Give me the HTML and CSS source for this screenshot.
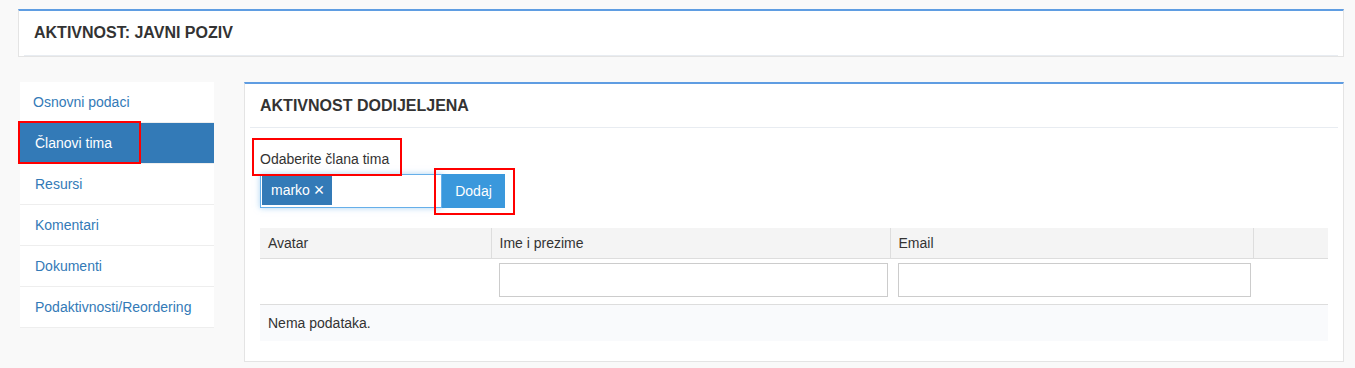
FILE: index.html
```html
<!DOCTYPE html>
<html lang="hr">
<head>
  <meta charset="UTF-8" />
  <title>Aktivnost: Javni poziv</title>
  <link rel="stylesheet" href="styles.css">
</head>
<body>

  <div class="page">
    <div class="panel title-panel">
      <div class="panel-heading">
        <h1>AKTIVNOST: JAVNI POZIV</h1>
      </div>
    </div>

    <div class="layout">
      <ul class="side-nav">
        <li><a href="#" class="nav-item first">Osnovni podaci</a></li>
        <li><a href="#" class="nav-item active">Članovi tima<span class="mark mark-nav"></span></a></li>
        <li><a href="#" class="nav-item">Resursi</a></li>
        <li><a href="#" class="nav-item">Komentari</a></li>
        <li><a href="#" class="nav-item">Dokumenti</a></li>
        <li><a href="#" class="nav-item">Podaktivnosti/Reordering</a></li>
      </ul>

      <div class="panel main-panel">
        <div class="panel-heading">
          <h2>AKTIVNOST DODIJELJENA</h2>
        </div>
        <div class="panel-body">
          <label class="field-label">Odaberite člana tima<span class="mark mark-label"></span></label>
          <div class="picker-row">
            <div class="tag-select">
              <span class="tag">marko <span class="tag-remove">×</span></span>
            </div>
            <button class="btn-add">Dodaj<span class="mark mark-btn"></span></button>
          </div>

          <table class="grid">
            <colgroup>
              <col style="width: 231px">
              <col style="width: 399px">
              <col style="width: 363px">
              <col>
            </colgroup>
            <thead>
              <tr>
                <th>Avatar</th>
                <th>Ime i prezime</th>
                <th>Email</th>
                <th></th>
              </tr>
              <tr class="filter-row">
                <td></td>
                <td><input type="text" class="filter-input" /></td>
                <td><input type="text" class="filter-input" /></td>
                <td></td>
              </tr>
            </thead>
            <tbody>
              <tr class="empty-row">
                <td colspan="4">Nema podataka.</td>
              </tr>
            </tbody>
          </table>
        </div>
      </div>
    </div>
  </div>

</body>
</html>
```

FILE: styles.css
```css
* { margin: 0; padding: 0; box-sizing: border-box; font-family: 'Liberation Sans', Arial, sans-serif; }
body { background: #f9f9f9; color: #333; font-size: 14px; }
.page { padding: 9px 11px 0 18px; }

.panel {
  background: white; border: 1px solid #e4e4e4; border-top: 2px solid #5f9de2;
  padding: 0 5px;
}
.panel-heading {
  height: 44px; padding: 0 10px; border-bottom: 1px solid #e8ecf1;
  display: flex; align-items: center;
}
.panel-heading h1, .panel-heading h2 { font-size: 16px; font-weight: bold; color: #333; }
.title-panel .panel-heading { height: 45px; }

.layout { display: flex; gap: 30px; margin-top: 25px; align-items: flex-start; }

.side-nav { list-style: none; width: 194px; margin-left: 2px; background: white; }
.side-nav li { border-bottom: 1px solid #eee; }
.nav-item {
  display: block; position: relative; height: 40px; line-height: 40px;
  padding-left: 15px; color: #337ab7; text-decoration: none;
}
.nav-item.first { padding-left: 13px; }
.nav-item.active { background: #337ab7; color: white; }

.main-panel { flex: 1; }
.panel-body { padding: 21px 10px 20px; }

.field-label { display: inline-block; position: relative; line-height: 20px; margin-bottom: 5px; }

.picker-row { display: flex; }
.tag-select {
  width: 182px; height: 34px; border: 1px solid #66afe9; padding: 1px;
  box-shadow: 0 0 6px rgba(102, 175, 233, 0.55);
}
.tag {
  display: inline-block; height: 29px; line-height: 29px; padding: 0 8px 0 9px;
  background: #337ab7; color: white;
}
.tag-remove { font-size: 18px; vertical-align: top; }
.btn-add {
  position: relative; width: 63px; height: 34px; border: none; background: #3a98dc;
  color: white; font-size: 14px;
}

.mark { position: absolute; border: 2px solid #f00; pointer-events: none; }
.mark-nav { left: -2px; top: -2px; width: 123px; height: 43px; }
.mark-label { left: -8px; top: -11px; width: 150px; height: 38px; }
.mark-btn { left: -8px; top: -6px; width: 81px; height: 47px; }

.grid { width: 100%; border-collapse: collapse; table-layout: fixed; margin-top: 20px; }
.grid th {
  height: 30px; background: #f4f4f4; font-weight: normal; text-align: left;
  padding: 0 8px; border-bottom: 1px solid #ddd; border-left: 1px solid #ddd;
}
.grid th:first-child { border-left: none; }
.filter-row td { padding: 4px 2px 6px 8px; border-bottom: 1px solid #ddd; height: 46px; }
.filter-input { display: block; width: 100%; height: 34px; border: 1px solid #ccc; }
.empty-row td { height: 37px; padding: 0 8px; background: #f9fafc; }
```
